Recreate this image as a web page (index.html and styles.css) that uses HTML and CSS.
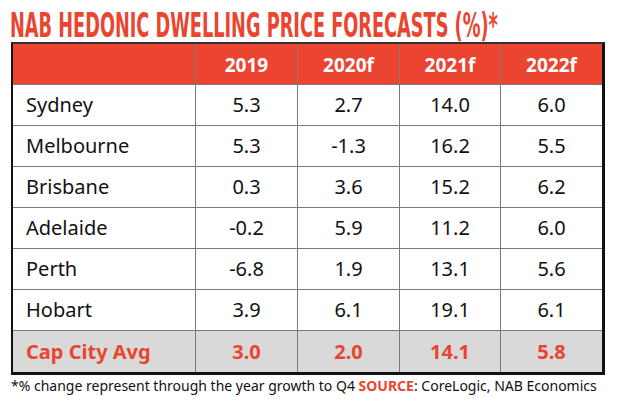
FILE: index.html
```html
<!DOCTYPE html>
<html lang="en">
<head>
<meta charset="utf-8">
<title>NAB Hedonic Dwelling Price Forecasts</title>
<link rel="stylesheet" href="styles.css">
</head>
<body>
<div class="page">
  <h1 class="title"><span class="title-text">NAB HEDONIC DWELLING PRICE FORECASTS (%)*</span></h1>
  <table class="grid">
    <colgroup>
      <col class="c-city"><col class="c-a"><col class="c-a"><col class="c-b"><col class="c-b">
    </colgroup>
    <thead>
      <tr class="head"><th></th><th>2019</th><th>2020f</th><th>2021f</th><th>2022f</th></tr>
    </thead>
    <tbody>
      <tr><td>Sydney</td><td>5.3</td><td>2.7</td><td>14.0</td><td>6.0</td></tr>
      <tr><td>Melbourne</td><td>5.3</td><td>-1.3</td><td>16.2</td><td>5.5</td></tr>
      <tr><td>Brisbane</td><td>0.3</td><td>3.6</td><td>15.2</td><td>6.2</td></tr>
      <tr><td>Adelaide</td><td>-0.2</td><td>5.9</td><td>11.2</td><td>6.0</td></tr>
      <tr><td>Perth</td><td>-6.8</td><td>1.9</td><td>13.1</td><td>5.6</td></tr>
      <tr><td>Hobart</td><td>3.9</td><td>6.1</td><td>19.1</td><td>6.1</td></tr>
      <tr class="avg"><td>Cap City Avg</td><td>3.0</td><td>2.0</td><td>14.1</td><td>5.8</td></tr>
    </tbody>
  </table>
  <p class="note">*% change represent through the year growth to Q4 <span class="src">SOURCE</span>: CoreLogic, NAB Economics</p>
</div>
</body>
</html>
```

FILE: styles.css
```css
html, body {
  margin: 0;
  padding: 0;
  background: #ffffff;
}

.page {
  width: 617px;
  height: 402px;
  padding: 0 0 0 11px;
  box-sizing: border-box;
  font-family: "Noto Sans", "DejaVu Sans", sans-serif;
  color: #111111;
  overflow: hidden;
}

.title {
  margin: 0;
  height: 42px;
  padding-top: 10px;
  box-sizing: border-box;
  font-family: "DejaVu Sans Condensed", "DejaVu Sans", sans-serif;
  font-weight: 700;
  font-size: 33px;
  line-height: 32px;
  color: #e9452f;
  white-space: nowrap;
  width: 606px;
  overflow: visible;
  contain: paint;
}

.title-text {
  display: inline-block;
  transform: scaleX(0.597);
  transform-origin: left center;
  margin-left: -1px;
}

.grid {
  border-collapse: separate;
  border-spacing: 0;
  table-layout: fixed;
  width: 593px;
  border-left: 2px solid #111111;
  border-top: 2px solid #333333;
  border-right: 3px solid #111111;
  border-bottom: 3px solid #111111;
}

.c-city { width: 183px; }
.c-a { width: 102px; }
.c-b { width: 101px; }

.grid th,
.grid td {
  height: 41px;
  box-sizing: border-box;
  padding: 0;
  border-right: 1px solid #7a7a7a;
  border-bottom: 1px solid #7a7a7a;
  text-align: center;
  vertical-align: middle;
  font-size: 20px;
  line-height: 24px;
  font-weight: 400;
}

.grid th:last-child,
.grid td:last-child {
  border-right: 0;
}

.grid td:first-child {
  text-align: left;
  padding-left: 13px;
}

.head th {
  background: #eb4431;
  color: #ffffff;
  font-weight: 700;
  font-size: 19px;
  padding-top: 1px;
}

.avg td {
  background: #d9d9d9;
  color: #e9452f;
  font-weight: 700;
  border-bottom: 0;
}

.note {
  margin: 2px 0 0 0;
  font-size: 14px;
  line-height: 18px;
  white-space: nowrap;
  color: #111111;
}

.src {
  color: #e9452f;
  font-weight: 700;
}
```
